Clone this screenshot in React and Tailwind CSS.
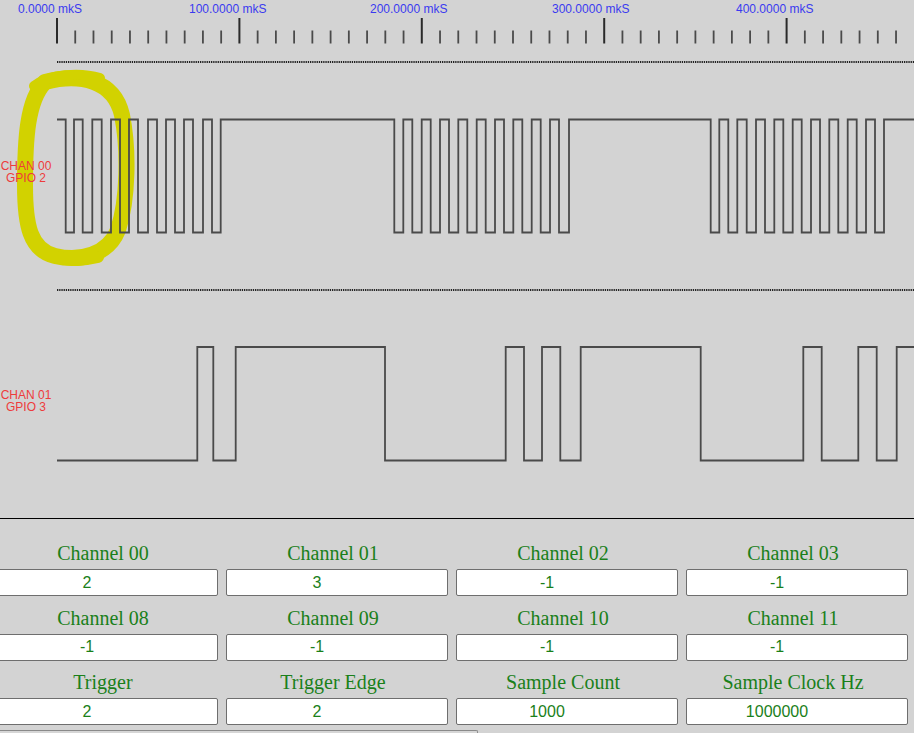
import React from 'react';

// transitions (px) measured along the time axis, 0 µs = x 57
const chan00Lows = [
  [65.7, 74], [82.7, 92.3], [101.7, 111], [120, 129], [138, 148], [157, 166], [175, 184], [193, 203], [212, 220.7],
  [394.3, 403.3], [412.3, 421.7], [430.7, 440], [449, 458.3], [467.3, 476.7], [485.7, 495], [504, 513.3], [522.3, 531.7], [540.7, 550], [559, 569],
  [710.7, 719.3], [728.3, 737.3], [746.7, 756], [765, 774.3], [783.3, 792.7], [801.7, 811], [820, 829.3], [838.3, 847.7], [856.7, 866], [875, 884],
];

const chan01Highs = [
  [197.3, 213.3], [235.7, 385], [505.7, 524], [542, 560.3], [580.7, 700.7], [803.3, 821.7], [858.3, 876.7], [896.7, 916],
];

const timeLabels = [
  { x: 18, text: '0.0000 mkS' },
  { x: 189, text: '100.0000 mkS' },
  { x: 370, text: '200.0000 mkS' },
  { x: 552, text: '300.0000 mkS' },
  { x: 736, text: '400.0000 mkS' },
];

const fields = [
  ['Channel 00', '2'], ['Channel 01', '3'], ['Channel 02', '-1'], ['Channel 03', '-1'],
  ['Channel 08', '-1'], ['Channel 09', '-1'], ['Channel 10', '-1'], ['Channel 11', '-1'],
  ['Trigger', '2'], ['Trigger Edge', '2'], ['Sample Count', '1000'], ['Sample Clock Hz', '1000000'],
];

function buildTrace(startY, otherY, intervals) {
  let d = `M 57 ${startY}`;
  intervals.forEach(([a, b]) => {
    d += ` H ${a} V ${otherY} H ${b} V ${startY}`;
  });
  return d + ' H 914';
}

function Timeline() {
  const ticks = [];
  for (let i = 0; i < 47; i++) {
    const x = 57 + i * 18.24;
    const major = i % 10 === 0;
    ticks.push(
      <line key={i} x1={x} x2={x} y1={major ? 18 : 30.5} y2={43.5}
        stroke={major ? '#2a2a2a' : '#4a4a4a'} strokeWidth={major ? 2 : 1.8} />
    );
  }
  return (
    <g>
      {timeLabels.map((l) => (
        <text key={l.text} x={l.x} y={13} fontSize="12" fill="#3a3af0"
          fontFamily="'Liberation Sans', Arial, sans-serif">{l.text}</text>
      ))}
      {ticks}
    </g>
  );
}

function ChanLabel({ y, name, gpio }) {
  const font = "'Liberation Sans', Arial, sans-serif";
  return (
    <g fill="#ee3b3b" fontSize="12" fontFamily={font} textAnchor="middle">
      <text x={26} y={y}>{name}</text>
      <text x={26} y={y + 12}>{gpio}</text>
    </g>
  );
}

export default function App() {
  return (
    <div className="w-full h-screen overflow-hidden bg-[#d3d3d3]">
      {/* waveform canvas */}
      <svg width="914" height="518" className="block">
        <Timeline />
        <line x1={57} x2={914} y1={62} y2={62} stroke="#222" strokeWidth="2.2" strokeDasharray="1.3 0.9" />
        <line x1={57} x2={914} y1={290} y2={290} stroke="#222" strokeWidth="2.2" strokeDasharray="1.3 0.9" />

        {/* hand drawn highlight */}
        <g fill="none" stroke="#d2d200" strokeLinejoin="round" strokeLinecap="round">
          <path
            d="M 45 82 C 80 73, 114 80, 122 115 C 129 150, 128 200, 118 230 C 108 255, 80 262, 55 256 C 30 250, 25 225, 25 185 C 25 140, 27 100, 45 82 Z"
            strokeWidth="16"
          />
          <path d="M 32 238 C 42 258, 70 264, 98 257" strokeWidth="12" />
          <path d="M 34 86 C 50 74, 80 72, 100 78" strokeWidth="10" />
        </g>

        <path d={buildTrace(119.5, 232.5, chan00Lows)} fill="none" stroke="#4a4a4a" strokeWidth="1.8" />
        <path d={buildTrace(460.5, 347, chan01Highs)} fill="none" stroke="#4a4a4a" strokeWidth="1.8" />

        <ChanLabel y={170} name="CHAN 00" gpio="GPIO 2" />
        <ChanLabel y={399} name="CHAN 01" gpio="GPIO 3" />
      </svg>
      <div className="h-px bg-black" />

      {/* settings form */}
      <div className="ml-[-12px] pt-[22px]">
        <div className="grid grid-cols-[repeat(4,230px)] gap-y-[9.5px]">
          {fields.map(([label, value]) => (
            <div key={label} className="flex flex-col">
              <div className="h-[24px] leading-[24px] text-center text-[20px] text-[#1a801a] font-['Liberation_Serif',serif]">
                {label}
              </div>
              <input
                defaultValue={value}
                className="ml-[8px] mt-[4px] w-[222px] h-[27px] bg-white border border-[#6e6e6e] rounded-[2px] text-center pr-[40px] text-[16px] text-[#1a801a] font-['Liberation_Sans',Arial,sans-serif] outline-none"
              />
            </div>
          ))}
        </div>
        <div className="mt-[5px] w-[490px] h-[20px] border-t border-r border-[#8a8a8a] rounded-tr-[2px] bg-[#d6d6d6]" />
      </div>
    </div>
  );
}
